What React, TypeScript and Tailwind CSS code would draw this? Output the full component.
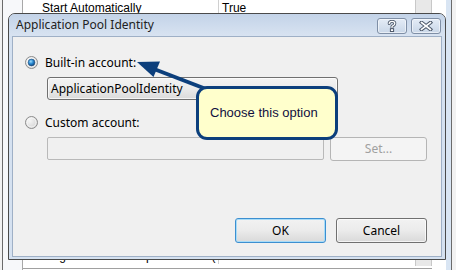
import React from "react";

function Radio({ checked }: { checked: boolean }) {
  return (
    <svg width="13" height="13" viewBox="0 0 13 13" className="shrink-0">
      <defs>
        <radialGradient id="rbg" cx="0.35" cy="0.35" r="0.8">
          <stop offset="0" stopColor="#f6f6f6" />
          <stop offset="1" stopColor="#cfcfcf" />
        </radialGradient>
        <radialGradient id="rdot" cx="0.4" cy="0.35" r="0.7">
          <stop offset="0" stopColor="#9fdcfb" />
          <stop offset="0.45" stopColor="#2f8fd6" />
          <stop offset="1" stopColor="#0b3f78" />
        </radialGradient>
      </defs>
      <circle cx="6.5" cy="6.5" r="6" fill="url(#rbg)" stroke="#8c8c8c" strokeWidth="1" />
      <circle cx="6.5" cy="6.5" r="4.5" fill="none" stroke="#ffffff" strokeOpacity="0.6" strokeWidth="1" />
      {checked && <circle cx="6.5" cy="6.5" r="3.4" fill="url(#rdot)" stroke="#27537f" strokeWidth="0.6" />}
    </svg>
  );
}

function CaptionButton({ kind }: { kind: "help" | "close" }) {
  return (
    <div className="w-[30px] h-[16px] rounded-[3px] border border-[#7f8fa6] bg-gradient-to-b from-[#e4ecf6] to-[#c9d7e8] flex items-center justify-center shadow-[inset_0_0_0_1px_rgba(255,255,255,0.55)]">
      {kind === "help" ? (
        <svg width="10" height="12" viewBox="0 0 10 12">
          <path d="M2.2 3.6 Q2.2 1.4 5 1.4 Q7.8 1.4 7.8 3.6 Q7.8 5 5.8 5.8 L5 6.4 L5 7.6" fill="none" stroke="#4c586a" strokeWidth="3" strokeLinecap="round" strokeLinejoin="round" />
          <path d="M2.2 3.6 Q2.2 1.4 5 1.4 Q7.8 1.4 7.8 3.6 Q7.8 5 5.8 5.8 L5 6.4 L5 7.6" fill="none" stroke="#ffffff" strokeWidth="1.3" strokeLinecap="round" strokeLinejoin="round" />
          <rect x="3.4" y="8.7" width="3.2" height="2.8" fill="#ffffff" stroke="#4c586a" strokeWidth="1" />
        </svg>
      ) : (
        <svg width="14" height="10" viewBox="0 0 14 10">
          <path d="M2.5 1.5 L11.5 8.5 M11.5 1.5 L2.5 8.5" stroke="#4c586a" strokeWidth="3.6" strokeLinecap="square" />
          <path d="M2.5 1.5 L11.5 8.5 M11.5 1.5 L2.5 8.5" stroke="#ffffff" strokeWidth="1.6" strokeLinecap="square" />
        </svg>
      )}
    </div>
  );
}

export default function App() {
  const ui = { fontFamily: '"Noto Sans", "Open Sans", sans-serif' };
  const bg = { fontFamily: '"Liberation Sans", Arial, sans-serif' };
  return (
    <div className="relative w-[456px] h-[270px] overflow-hidden bg-white">
      {/* background window */}
      <div className="flex h-full w-full text-[12px] text-black" style={bg}>
        <div className="w-[2px] bg-[#f2f2f2]" />
        <div className="w-[1px] bg-[#6b6b6b]" />
        <div className="w-[19px] bg-[#f7f8fa]" />
        <div className="w-[1px] bg-[#a8a8a8]" />
        <div className="flex flex-col w-[392px] bg-white">
          <div className="flex h-[16px] leading-[16px]">
            <div className="w-[195px] pl-[19px] whitespace-nowrap">Start Automatically</div>
            <div className="flex-1 border-l border-[#d0d0d0] pl-[3px] whitespace-nowrap">True</div>
          </div>
          <div className="flex-1" />
          <div className="flex h-[16px] leading-[16px]">
            <div className="w-[195px] pl-[19px] whitespace-nowrap">Ping Maximum Response Time (s</div>
            <div className="flex-1 border-l border-[#d0d0d0]" />
          </div>
          <div className="h-[4px]" />
          <div className="h-[1px] bg-[#a0a0a0]" />
          <div className="h-[1px]" />
        </div>
        <div className="w-[17px] flex flex-col">
          <div className="flex-1 bg-[#e8e8e8] border-x border-[#c8c8c8]" />
          <div className="h-[2px] bg-white" />
          <div className="h-[1px] bg-[#a0a0a0]" />
          <div className="h-[1px] bg-white" />
        </div>
        <div className="w-[14px] bg-white" />
        <div className="w-[5px] bg-[#d9e5f3]" />
        <div className="w-[1px] bg-[#6b6b6b]" />
        <div className="flex-1 bg-[#f2f2f2]" />
      </div>

      {/* dialog window */}
      <div
        className="absolute left-[8px] top-[13px] w-[438px] h-[247px] border border-[#4a4a4a] rounded-t-[7px] bg-[#d5e1f0] flex flex-col"
        style={ui}
      >
        <div className="h-[22px] flex rounded-t-[6px] bg-gradient-to-b from-[#c3d3e8] to-[#d8e3f1]">
          <span className="pl-[7px] pt-[3px] text-[12px] leading-[16px] text-[#222] whitespace-nowrap">
            Application Pool Identity
          </span>
          <div className="ml-auto flex gap-[4px] pt-[4px] pr-[4px]">
            <CaptionButton kind="help" />
            <CaptionButton kind="close" />
          </div>
        </div>
        <div className="mx-[3px] mb-[2px] flex-1 border border-[#9fb0c6] bg-[#f0f0f0] flex flex-col pl-[12px] pr-[14px] pt-[19px] pb-[13px] text-[12px] text-black">
          <div className="flex items-center h-[13px] gap-[7px]">
            <Radio checked />
            <span className="leading-[13px] whitespace-nowrap">Built-in account:</span>
          </div>
          <div className="ml-[22px] mt-[8px] w-[291px] h-[23px] rounded-[3px] border border-[#707070] bg-gradient-to-b from-[#f3f3f3] via-[#ebebeb] to-[#dbdbdb] flex items-center pl-[3px] shadow-[inset_0_0_0_1px_rgba(255,255,255,0.7)]">
            <span className="leading-[16px]">ApplicationPoolIdentity</span>
          </div>
          <div className="flex items-center h-[13px] gap-[7px] mt-[16px]">
            <Radio checked={false} />
            <span className="leading-[13px] whitespace-nowrap">Custom account:</span>
          </div>
          <div className="ml-[22px] mt-[8px] flex items-start gap-[6px]">
            <div className="w-[277px] h-[23px] rounded-[2px] border border-[#b9b9b9] bg-[#f0f0f0]" />
            <div className="w-[97px] h-[24px] rounded-[3px] border border-[#b5b5b5] bg-[#f4f4f4] flex items-center justify-center text-[#a0a0a0]">
              Set...
            </div>
          </div>
          <div className="mt-auto flex justify-end gap-[10px]">
            <div className="w-[91px] h-[25px] rounded-[3px] border border-[#3c8fd0] bg-gradient-to-b from-[#f2f2f2] via-[#ebebeb] to-[#d9d9d9] flex items-center justify-center shadow-[inset_0_0_0_1px_#a8dcf8]">
              OK
            </div>
            <div className="w-[91px] h-[25px] rounded-[3px] border border-[#707070] bg-gradient-to-b from-[#f2f2f2] via-[#ebebeb] to-[#d9d9d9] flex items-center justify-center shadow-[inset_0_0_0_1px_rgba(255,255,255,0.7)]">
              Cancel
            </div>
          </div>
        </div>
      </div>

      {/* arrow */}
      <svg className="absolute left-0 top-0" width="456" height="270" viewBox="0 0 456 270">
        <line x1="206" y1="89" x2="154" y2="69" stroke="#0c3f7c" strokeWidth="4" />
        <polygon points="137,62 160,61.5 153.5,77" fill="#0c3f7c" />
      </svg>

      {/* callout */}
      <div
        className="absolute left-[196px] top-[86px] w-[142px] h-[54px] rounded-[11px] border-[3px] border-[#0c3f7c] bg-[#ffffcc] flex items-center pl-[11px] text-[13px] text-[#101040]"
        style={bg}
      >
        Choose this option
      </div>
    </div>
  );
}
